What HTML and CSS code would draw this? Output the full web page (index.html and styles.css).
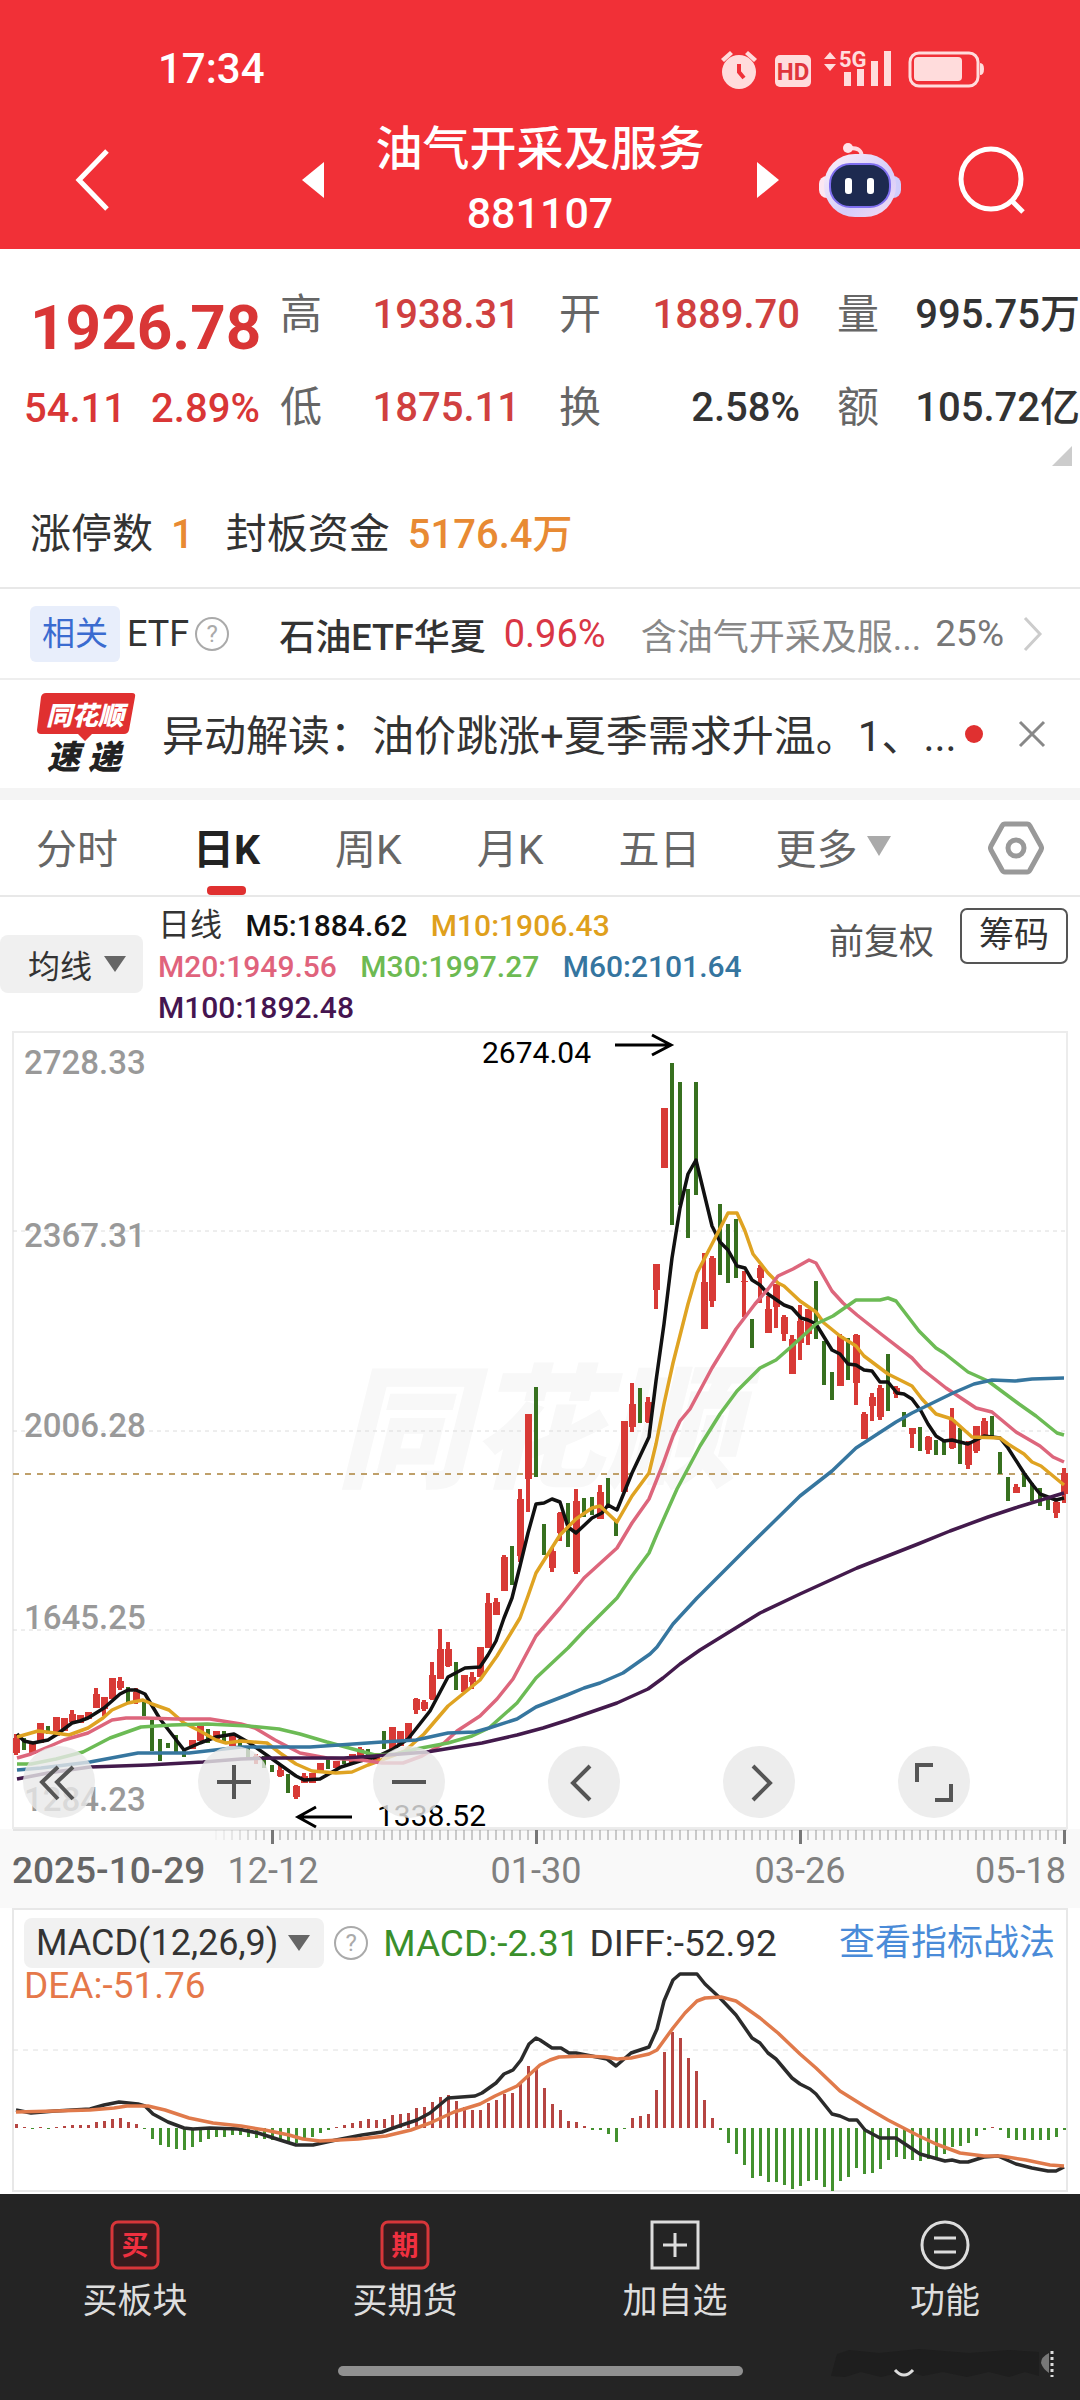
FILE: index.html
```html
<!DOCTYPE html>
<html lang="zh-CN">
<head>
    <meta charset="UTF-8">
    <meta name="viewport" content="width=device-width, initial-scale=1">
    <title>油气开采及服务 881107</title>
    <link rel="stylesheet" href="styles.css">
</head>
<body>
    <header class="header">
        <div class="status-bar">
            <span class="clock">17:34</span>
            <svg class="status-icons" viewBox="0 0 268 42" aria-hidden="true">
                <g fill="#ffdcdc">
                    <circle cx="21" cy="25" r="17"/>
                    <path d="M3 12l9-8 3 3-9 8zM39 12l-9-8-3 3 9 8z"/>
                    <rect x="57" y="8" width="36" height="32" rx="5"/>
                    <path d="M106 12l6-7 6 7zM106 17l6 7 6-7z"/>
                    <rect x="126" y="25" width="7" height="14"/>
                    <rect x="139" y="22" width="7" height="17"/>
                    <rect x="153" y="14" width="7" height="25"/>
                    <rect x="166" y="4" width="7" height="35"/>
                    <rect x="196" y="10" width="48" height="24" rx="4"/>
                    <path d="M262 16q4 0 4 6t-4 6z"/>
                </g>
                <rect x="192" y="6" width="68" height="33" rx="9" fill="none" stroke="#ffdcdc" stroke-width="3"/>
                <path d="M21 17v8l5 6" fill="none" stroke="#f03038" stroke-width="4"/>
                <text x="75" y="33" class="hd-text">HD</text>
                <text x="121" y="20" class="net-text">5G</text>
            </svg>
        </div>
        <div class="title-bar">
            <button class="icon-btn back" aria-label="返回">
                <svg width="36" height="64" viewBox="0 0 36 64"><path d="M32 3L4 32l28 29" fill="none" stroke="#fff" stroke-width="5"/></svg>
            </button>
            <div class="title-group">
                <button class="icon-btn" aria-label="上一个">
                    <svg width="24" height="38" viewBox="0 0 24 38"><path d="M23 1v36L1 19z" fill="#fff"/></svg>
                </button>
                <h1 class="title">油气开采及服务<span class="code">881107</span></h1>
                <button class="icon-btn" aria-label="下一个">
                    <svg width="24" height="38" viewBox="0 0 24 38"><path d="M1 1v36l22-18z" fill="#fff"/></svg>
                </button>
            </div>
            <div class="title-tools">
                <button class="icon-btn" aria-label="智能助手">
                    <svg width="82" height="76" viewBox="0 0 82 76">
                        <defs>
                            <linearGradient id="shell" x1="0" y1="0" x2="1" y2="1">
                                <stop offset="0" stop-color="#fdf0f8"/>
                                <stop offset="0.6" stop-color="#d5cdfa"/>
                                <stop offset="1" stop-color="#f6dcf2"/>
                            </linearGradient>
                        </defs>
                        <path d="M43 16c0-8-4-10-12-10" fill="none" stroke="#ffd9e2" stroke-width="4"/>
                        <circle cx="29" cy="6" r="5" fill="#ffe3ea"/>
                        <rect x="0" y="34" width="16" height="22" rx="8" fill="#fbe6f2"/>
                        <rect x="66" y="34" width="16" height="22" rx="8" fill="#cfcdfb"/>
                        <rect x="5" y="12" width="72" height="63" rx="31" fill="url(#shell)"/>
                        <rect x="11" y="22" width="60" height="43" rx="20" fill="#1d2a50" stroke="#7f6ff0" stroke-width="2"/>
                        <rect x="26" y="36" width="7" height="16" rx="3" fill="#fff"/>
                        <rect x="48" y="36" width="7" height="16" rx="3" fill="#fff"/>
                    </svg>
                </button>
                <button class="icon-btn" aria-label="搜索">
                    <svg width="68" height="68" viewBox="0 0 68 68" fill="none" stroke="#fff" stroke-width="5"><circle cx="33" cy="33" r="30"/><path d="M53 54l12 12"/></svg>
                </button>
            </div>
        </div>
    </header>

    <main>
        <section class="quote">
            <div class="price">
                <strong class="last">1926.78</strong>
                <div class="change"><span>54.11</span><span>2.89%</span></div>
            </div>
            <dl class="stats">
                <div class="stat"><dt>高</dt><dd class="up">1938.31</dd></div>
                <div class="stat"><dt>开</dt><dd class="up">1889.70</dd></div>
                <div class="stat"><dt>量</dt><dd>995.75万</dd></div>
                <div class="stat"><dt>低</dt><dd class="up">1875.11</dd></div>
                <div class="stat"><dt>换</dt><dd>2.58%</dd></div>
                <div class="stat"><dt>额</dt><dd>105.72亿</dd></div>
            </dl>
            <svg class="corner" width="20" height="20" viewBox="0 0 20 20" aria-hidden="true"><path d="M20 0v20H0z" fill="#ccc"/></svg>
        </section>

        <section class="limit">
            <span>涨停数</span><b>1</b><span class="limit-fund">封板资金</span><b>5176.4万</b>
        </section>

        <section class="etf">
            <span class="tag">相关</span>
            <span class="etf-label">ETF</span>
            <button class="help" aria-label="说明">?</button>
            <span class="etf-name">石油ETF华夏</span>
            <span class="etf-change">0.96%</span>
            <span class="etf-holding">含油气开采及服...</span>
            <span class="etf-pct">25%</span>
            <svg width="20" height="36" viewBox="0 0 20 36" aria-hidden="true"><path d="M2 2l15 16L2 34" fill="none" stroke="#ccc" stroke-width="3"/></svg>
        </section>

        <section class="news">
            <svg class="news-logo" width="100" height="88" viewBox="0 0 100 88" role="img" aria-label="同花顺速递">
                <path d="M10 3h86q4 0 3 4l-6 33q-1 4-5 4H56l-7 7-7-7H5q-4 0-4-4L5 7q1-4 5-4z" fill="#e03030"/>
                <text x="49" y="35" class="logo-top">同花顺</text>
                <text x="48" y="79" class="logo-bottom">速 递</text>
            </svg>
            <a class="news-text" href="#">异动解读：油价跳涨+夏季需求升温。1、...</a>
            <i class="dot"></i>
            <button class="icon-btn" aria-label="关闭">
                <svg width="28" height="28" viewBox="0 0 28 28"><path d="M2 2l24 24M26 2L2 26" stroke="#888" stroke-width="3"/></svg>
            </button>
        </section>

        <nav class="tabs">
            <button class="tab">分时</button>
            <button class="tab active">日K</button>
            <button class="tab">周K</button>
            <button class="tab">月K</button>
            <button class="tab">五日</button>
            <button class="tab more">更多<svg width="26" height="22" viewBox="0 0 26 22"><path d="M1 1h24L13 21z" fill="#aaa"/></svg></button>
            <button class="icon-btn settings" aria-label="设置">
                <svg width="56" height="54" viewBox="0 0 56 54" fill="none" stroke="#999" stroke-width="5"><path d="M17 3h22q2 0 3 2l11 20q1 2 0 4L42 49q-1 2-3 2H17q-2 0-3-2L3 29q-1-2 0-4L14 5q1-2 3-2z"/><circle cx="28" cy="27" r="8"/></svg>
            </button>
        </nav>

        <section class="ma-bar">
            <button class="ma-select">均线<svg width="22" height="16" viewBox="0 0 22 16"><path d="M0 0h22L11 16z" fill="#666"/></svg></button>
            <div class="ma-values">
                <span class="c-text daily">日线</span>
                <span class="c-m5">M5:1884.62</span>
                <span class="c-m10">M10:1906.43</span><br>
                <span class="c-m20">M20:1949.56</span>
                <span class="c-m30">M30:1997.27</span>
                <span class="c-m60">M60:2101.64</span><br>
                <span class="c-m100">M100:1892.48</span>
            </div>
            <div class="ma-tools">
                <button class="adjust">前复权</button>
                <button class="chips">筹码</button>
            </div>
        </section>

        <section class="kline">
            <svg id="kline-chart" class="chart" viewBox="0 0 1080 798" role="img" aria-label="日K线图"></svg>
            <div class="chart-buttons">
                <button aria-label="最早"><svg viewBox="0 0 72 72"><path d="M35 21L19 36l16 17M50 21L34 36l16 17"/></svg></button>
                <button aria-label="放大"><svg viewBox="0 0 72 72"><path d="M19 36h34M36 19v34"/></svg></button>
                <button aria-label="缩小"><svg viewBox="0 0 72 72"><path d="M19 36h34"/></svg></button>
                <button aria-label="左移"><svg viewBox="0 0 72 72"><path d="M42 20L25 37l17 17"/></svg></button>
                <button aria-label="右移"><svg viewBox="0 0 72 72"><path d="M30 20l17 17-17 17"/></svg></button>
                <button aria-label="全屏"><svg viewBox="0 0 72 72"><path d="M19 36V19h16M37 54h16V38"/></svg></button>
            </div>
        </section>
        <svg id="date-axis" class="chart date-axis" viewBox="0 0 1080 79" role="img" aria-label="日期"></svg>

        <section class="macd">
            <svg id="macd-chart" class="chart" viewBox="0 0 1080 286" role="img" aria-label="MACD"></svg>
            <div class="macd-head">
                <button class="macd-select">MACD(12,26,9)<svg width="22" height="16" viewBox="0 0 22 16"><path d="M0 0h22L11 16z" fill="#666"/></svg></button>
                <button class="help" aria-label="说明">?</button>
                <span class="c-macd">MACD:-2.31</span>
                <span class="c-text">DIFF:-52.92</span>
                <a class="macd-link" href="#">查看指标战法</a>
                <span class="c-dea">DEA:-51.76</span>
            </div>
        </section>
    </main>

    <footer class="footer">
        <nav class="actions">
            <button class="action">
                <svg width="50" height="50" viewBox="0 0 50 50"><rect x="2" y="2" width="46" height="46" rx="6" fill="#351c1e" stroke="#d8363a" stroke-width="3"/><text x="25" y="35" class="action-glyph">买</text></svg>
                买板块
            </button>
            <button class="action">
                <svg width="50" height="50" viewBox="0 0 50 50"><rect x="2" y="2" width="46" height="46" rx="6" fill="#351c1e" stroke="#d8363a" stroke-width="3"/><text x="25" y="35" class="action-glyph">期</text></svg>
                买期货
            </button>
            <button class="action">
                <svg width="50" height="50" viewBox="0 0 50 50" fill="none" stroke="#ddd" stroke-width="3"><path d="M2 2h46v46H2zM13 25h24M25 13v24"/></svg>
                加自选
            </button>
            <button class="action">
                <svg width="50" height="50" viewBox="0 0 50 50" fill="none" stroke="#ddd" stroke-width="3"><circle cx="25" cy="25" r="23"/><path d="M14 18h22M14 32h22"/></svg>
                功能
            </button>
        </nav>
        <div class="home-bar"></div>
        <svg class="mark" width="230" height="34" viewBox="0 0 230 34" aria-hidden="true">
            <path d="M4 30l6-22 12-4 30 3 40-4 50 4 40-3 30 2v24l-14-4-16 5-20-5-22 5-24-5-20 4-16-5-26 6-20-5-16 5z" fill="#1e1e1e"/>
            <path d="M68 24q9 10 18 0" fill="none" stroke="#ddd" stroke-width="3"/>
            <path d="M222 7q-8 4-8 10 2 6 8 10z" fill="#777"/>
            <path d="M225 5v26" stroke="#ddd" stroke-width="3" stroke-dasharray="3 3"/>
        </svg>
    </footer>

    <script src="chart.js"></script>
</body>
</html>
```
FILE: styles.css
```css
* { box-sizing: border-box; }
body { margin: 0; background: #fff; color: #333; font-family: Roboto, "Noto Sans CJK SC", sans-serif; font-size: 36px; }
button { padding: 0; border: none; background: none; color: inherit; font: inherit; cursor: pointer; }
a { color: inherit; text-decoration: none; }
svg { display: block; flex-shrink: 0; }
.icon-btn { display: flex; }

/* header */
.header { background: #f13037; color: #fff; padding-top: 45px; height: 249px; }
.status-bar { display: flex; justify-content: space-between; align-items: center; padding: 0 94px 0 158px; height: 46px; }
.clock { font-size: 42px; font-weight: 500; }
.status-icons { width: 268px; height: 42px; }
.hd-text { font-size: 24px; font-weight: 700; fill: #e0353c; text-anchor: middle; }
.net-text { font-size: 22px; font-weight: 700; fill: #ffdcdc; }
.title-bar { display: grid; grid-template-columns: 1fr auto 1fr; align-items: center; margin-top: 23px; }
.back { padding-left: 75px; }
.title-group { display: flex; align-items: center; gap: 51px; }
.title { margin: 0; padding-top: 4px; text-align: center; font-size: 47px; font-weight: 500; line-height: 62px; }
.code { display: block; font-size: 43px; line-height: 66px; }
.title-tools { display: flex; justify-content: flex-end; align-items: center; gap: 57px; padding-right: 54px; }

/* quote */
.quote { position: relative; display: grid; grid-template-columns: 280px 1fr; height: 221px; padding-top: 26px; font-weight: 500; }
.price { color: #d93636; padding-top: 10px; }
.last { display: block; padding-left: 30px; font-size: 62px; line-height: 86px; font-weight: 700; }
.change { display: flex; gap: 25px; padding-left: 24px; margin-top: 10px; font-size: 40px; line-height: 56px; }
.stats { display: grid; grid-template-columns: 240px 280px 1fr; grid-auto-rows: 93px; margin: 0; }
.stat { display: flex; justify-content: space-between; line-height: 80px; font-size: 40px; white-space: nowrap; }
.stat:nth-child(3n+2) { padding-left: 39px; }
.stat:nth-child(3n) { padding-left: 37px; }
.stat dt { font-size: 42px; font-weight: 400; color: #666; }
.stat dd { margin: 0; }
.up { color: #d04040; }
.corner { position: absolute; right: 8px; bottom: 4px; }

.limit { display: flex; align-items: baseline; height: 119px; padding: 34px 30px 0; border-bottom: 2px solid #e8e8e8; font-size: 41px; line-height: 60px; }
.limit b { margin-left: 18px; color: #e88a33; font-weight: 500; font-size: 40px; }
.limit-fund { margin-left: 32px; }

/* related etf */
.etf { display: flex; align-items: center; height: 91px; padding: 0 37px 0 30px; white-space: nowrap; border-bottom: 2px solid #eee; }
.tag { padding: 0 12px; border-radius: 6px; background: #e8eefb; color: #3a6bd0; font-size: 33px; line-height: 56px; }
.etf-label { margin-left: 7px; }
.help { width: 34px; height: 34px; border: 2px solid #aaa; border-radius: 50%; color: #aaa; font-size: 24px; line-height: 28px; }
.etf .help { margin: 0 50px 0 6px; }
.etf-name { font-weight: 500; }
.etf-change { margin-left: 18px; color: #d93645; font-size: 38px; }
.etf-holding { margin-left: auto; color: #888; }
.etf-pct { margin: 0 19px 0 14px; color: #777; font-size: 37px; }

.news { display: flex; align-items: center; height: 108px; padding: 0 34px 0 36px; }
.logo-top, .logo-bottom { font-weight: 900; font-style: italic; text-anchor: middle; }
.logo-top { font-size: 26px; fill: #fff; }
.logo-bottom { font-size: 33px; fill: #222; }
.news-text { flex: 1; margin-left: 26px; padding-bottom: 4px; font-size: 42px; white-space: nowrap; }
.dot { width: 18px; height: 18px; margin-right: 35px; border-radius: 50%; background: #e03030; }

/* period tabs */
.tabs { display: flex; align-items: center; height: 109px; padding: 0 36px; border-top: 12px solid #f4f4f4; border-bottom: 2px solid #e8e8e8; color: #666; font-size: 41px; }
.tab { position: relative; height: 100%; margin-right: 75px; padding-bottom: 4px; white-space: nowrap; }
.active { color: #222; font-weight: 700; }
.active::after { content: ""; position: absolute; left: 14px; right: 14px; bottom: 0; height: 9px; border-radius: 4px; background: #e03030; }
.more { display: flex; align-items: center; gap: 8px; margin-right: 0; }
.settings { margin-left: auto; }

/* moving averages */
.ma-bar { display: flex; align-items: flex-start; height: 134px; font-size: 30px; }
.ma-select { display: flex; align-items: center; gap: 12px; width: 143px; height: 58px; margin-top: 38px; padding-left: 28px; border-radius: 8px; background: #f0f0f0; font-size: 32px; }
.ma-values { margin: 8px 0 0 15px; line-height: 41px; font-weight: 500; white-space: nowrap; }
.ma-values span { margin-right: 16px; }
.daily { font-size: 32px; font-weight: 400; }
.ma-tools { display: flex; align-items: center; gap: 26px; margin: 11px 12px 0 auto; }
.adjust { padding-top: 4px; color: #555; font-size: 35px; }
.chips { height: 56px; padding: 0 17px; border: 2px solid #555; border-radius: 7px; font-size: 35px; line-height: 50px; }
.c-text { color: #333; }
.c-m5 { color: #111; }
.c-m10 { color: #dfa01c; }
.c-m20 { color: #e0637c; }
.c-m30 { color: #6dba52; }
.c-m60 { color: #35759f; }
.c-m100 { color: #451550; }
.c-macd { color: #3a8f2b; }
.c-dea { color: #e5784a; }

/* charts */
.chart { width: 100%; height: auto; overflow: visible; }
.kline { position: relative; }
.chart-buttons { position: absolute; left: 0; right: 0; bottom: 11px; display: flex; gap: 103px; padding-left: 23px; }
.chart-buttons button { width: 72px; height: 72px; border-radius: 50%; background: rgba(232, 232, 232, 0.8); }
.chart-buttons path { fill: none; stroke: #555; stroke-width: 4; }
.date-axis { background: #f9f9f9; }
.axis-label { font-size: 33px; font-weight: 500; fill: #999; }
.peak-label { font-size: 30px; fill: #000; }
.date-label { font-size: 36px; fill: #808080; }
.date-label.first { font-size: 37px; font-weight: 500; fill: #666; }
.watermark { font-size: 134px; font-weight: 900; font-style: italic; fill: #f8f8f8; }

.macd { position: relative; }
.macd-head { position: absolute; top: 10px; left: 24px; right: 25px; display: grid; grid-template-columns: auto auto auto auto 1fr; align-items: center; column-gap: 10px; font-size: 37px; white-space: nowrap; }
.macd-select { display: flex; align-items: center; gap: 10px; height: 50px; padding: 0 14px 0 12px; border-radius: 8px; background: #f1f1f1; font-size: 36px; }
.macd-head .help { margin-right: 5px; }
.macd-link { justify-self: end; color: #4a8bd8; font-size: 36px; line-height: 50px; }
.c-dea { grid-column: 1 / -1; line-height: 36px; }

/* bottom actions */
.footer { position: relative; height: 207px; padding-top: 26px; background: #242424; color: #ddd; }
.actions { display: grid; grid-template-columns: repeat(4, 1fr); }
.action { display: flex; flex-direction: column; align-items: center; gap: 6px; font-size: 35px; line-height: 52px; }
.action-glyph { font-size: 27px; font-weight: 700; fill: #f03040; text-anchor: middle; }
.home-bar { width: 405px; max-width: 60%; height: 10px; margin: 38px auto 0; border-radius: 5px; background: #909090; }
.mark { position: absolute; right: 23px; bottom: 21px; }
```
FILE: chart.js
```js
const RED = '#d83a36';
const GREEN = '#37701f';
const STEP = 8;
const LEFT = 16;

// [high, low, up, body top, body bottom]
const candles = [
    [703,724,1,707,722],[707,719,0],[713,723,1],[692,712,1],[695,703,0],[686,705,1],[687,700,1],[679,693,1,683,691],
    [684,692,1],[681,688,1],[657,677,1,663,677],[666,685,1,666,678],[647,668,1],[646,659,1,650,657],[656,672,0],[657,673,1,661,671],
    [670,685,0],[689,720,0],[708,730,0],[712,717,0],[704,721,0],[717,726,0],[709,718,1],[695,710,1],
    [698,712,0],[700,708,1],[700,712,0],[703,715,1],[708,717,0],[715,728,0],[723,733,1,725,729],[725,737,0],
    [734,741,0],[734,746,1,739,745],[743,762,0],[754,768,1,755,766],[742,752,1,745,752],[742,752,1],[732,742,1],[728,738,0],
    [730,737,1],[727,733,0],[723,732,1],[716,726,1,718,726],[718,727,0],[722,733,1],[700,718,0],[696,718,1],
    [700,715,1],[692,710,1],[667,683,1,668,679],[669,680,1,671,678],[631,669,1,644,668],[598,648,1,618,648],[611,636,1,618,635],[631,659,0],
    [644,661,1],[641,658,1,646,651],[616,646,1],[562,617,1,572,617],[567,584,1,571,584],[524,560,1,526,560],[515,554,0],[458,531,1,468,525],
    [383,481,1,383,448],[356,446,0],[493,524,0],[517,541,1,520,537],[481,510,1,482,502],[472,516,0],[458,543,1,470,541],[467,486,0],
    [466,484,0],[454,488,1,461,488],[447,475,0],[488,505,0],[390,461,1],[352,401,1,373,396],[357,392,0],[366,392,1,371,391],
    [233,278,1,233,259],[77,137,1],[32,194,0,41,69],[51,174,0],[158,207,0],[51,164,0,51,164],[222,298,1,251,298],[225,276,1,227,270],
    [173,244,0],[193,252,0],[188,247,0],[240,286,1,250,251],[288,317,0],[234,272,1,237,247],[265,302,1,278,302],[253,297,1,253,276],
    [284,310,1,286,303],[304,343,1,308,343],[274,329,1,290,312],[278,314,1,278,303],[250,308,0],[310,354,0],[341,369,0],[303,355,1,305,355],
    [307,349,0],[303,374,1,304,352],[381,408,1,383,408],[362,390,1,366,375],[354,389,1,357,386],[323,380,0],[355,367,1,357,363],[381,396,0],
    [397,417,1,397,403],[396,420,0],[405,423,1,406,419],[409,424,0],[409,424,0],[377,418,1,389,417],[397,433,0],[410,438,1,412,434],
    [395,422,1,395,420],[387,405,1,390,405],[385,407,0],[421,443,0],[446,470,0],[453,462,1,456,462],[443,456,0],[452,470,0],
    [457,475,0],[468,479,0],[470,487,1,471,482],[437,472,1,442,463]
];

const averages = [
    ['#111', '17,703 24,710 33,712 48,709 56,704 72,692 80,690 88,687 104,677 120,663 128,659 136,659 145,663 160,688 184,719 200,712 216,706 234,703 248,711 275,730 296,745 304,749 320,748 341,736 360,730 376,726 393,718 408,708 430,680 448,646 465,637 480,636 488,624 496,610 504,587 512,567 520,535 528,502 536,473 544,472 552,468 560,471 568,496 576,502 592,487 602,482 608,474 617,479 632,442 641,423 649,406 656,350 664,293 672,227 680,177 688,143 696,129 704,162 712,195 720,211 728,219 737,235 745,237 752,249 760,254 768,263 784,274 792,277 801,287 808,289 816,293 832,319 840,323 848,333 856,334 864,339 872,340 880,351 888,351 897,362 904,363 912,368 921,380 928,393 936,405 944,410 952,409 968,413 984,405 1000,407 1008,417 1024,442 1032,453 1040,463 1056,469 1064,467'],
    ['#dfa322', '17,706 38,700 55,702 69,704 88,697 103,687 112,679 128,672 143,669 152,673 169,679 184,692 200,700 216,709 226,712 241,710 267,712 280,722 296,733 312,740 336,742 352,741 368,734 384,728 405,720 416,710 424,703 448,675 480,649 497,625 520,587 528,565 536,542 560,504 576,488 592,477 600,475 617,491 632,465 649,442 656,413 664,373 673,332 688,273 697,242 712,213 728,182 737,182 745,200 753,223 768,242 778,252 784,255 800,270 816,281 824,292 840,305 856,315 864,325 888,343 912,355 922,368 936,383 952,388 972,406 1000,407 1008,413 1024,423 1032,431 1041,435 1064,454'],
    ['#dd667c', '17,727 31,723 48,716 64,709 88,702 112,689 126,687 145,687 176,688 210,688 241,693 255,697 275,709 300,722 327,727 362,729 382,732 403,732 422,725 444,712 457,700 480,685 497,668 513,648 536,605 560,577 584,547 617,517 632,492 649,468 663,433 673,405 680,390 690,378 712,337 736,298 755,273 768,258 778,245 793,238 809,229 816,232 832,260 843,272 857,284 881,303 912,327 922,338 946,357 976,377 992,381 1016,401 1040,415 1053,426 1064,431'],
    ['#6cbb55', '17,733 31,733 56,728 83,721 110,707 141,696 172,694 207,693 248,695 279,698 300,703 327,711 375,724 396,723 416,718 448,712 472,705 489,697 517,672 536,647 568,617 584,600 617,567 632,545 649,522 657,503 677,458 700,415 720,383 737,360 760,337 776,329 792,315 816,293 833,285 856,269 880,269 888,267 896,270 919,300 936,317 944,322 968,341 988,350 1019,373 1036,385 1057,402 1064,404'],
    ['#36769f', '17,739 41,737 90,731 138,722 189,722 241,716 310,716 382,711 416,709 448,702 475,701 489,697 517,688 536,676 567,664 584,657 600,652 623,642 640,630 650,623 657,616 673,593 697,567 747,517 800,465 832,440 856,417 896,391 912,382 953,362 974,353 992,349 1015,350 1032,348 1064,347'],
    ['#431a4c', '17,748 48,742 90,736 148,734 203,731 241,728 275,727 344,727 375,725 427,721 482,712 517,704 543,697 568,689 617,672 648,658 663,647 680,633 700,619 760,582 800,563 857,537 918,513 950,500 988,486 1015,477 1064,462']
];

const macdBars = [
    4,1,-1,1,-1,1,2,3,3,3,6,7,9,10,6,4,-1,-11,-17,-19,-21,-22,-19,-14,-11,-9,-9,-7,-7,-9,-10,-11,-12,-12,-14,-15,-11,-9,-5,-2,
    1,3,5,7,9,8,9,13,14,15,20,21,26,31,33,27,21,18,18,25,28,34,35,44,62,59,40,24,18,7,6,2,-2,-2,-6,-14,-1,10,12,14,
    38,76,96,90,70,57,28,10,-2,-15,-26,-37,-50,-48,-54,-54,-57,-61,-58,-53,-52,-59,-63,-53,-49,-40,-46,-45,-41,-32,
    -29,-31,-32,-33,-31,-29,-26,-19,-18,-15,-8,-2,1,-2,-10,-12,-12,-12,-12,-12,-9,-2
];
const diffLine = '16,202 31,205 55,203 90,201 104,197 119,194 138,196 145,198 153,206 168,214 184,220 193,221 210,220 238,221 258,225 280,232 296,237 313,237 336,232 362,227 382,224 399,218 417,212 430,205 448,190 475,188 482,185 496,175 504,166 513,162 521,152 529,136 536,130 540,132 552,140 561,140 569,145 576,145 607,151 616,158 631,145 649,139 657,121 664,93 673,72 680,66 697,66 705,76 720,90 736,107 752,130 760,135 768,145 776,151 792,170 800,176 810,181 816,186 832,206 840,208 849,212 857,212 865,222 880,230 896,230 905,236 920,246 945,253 952,252 960,254 968,254 984,249 998,248 1016,256 1032,260 1048,263 1056,263 1064,259';
const deaLine = '16,204 55,203 90,202 114,200 127,198 148,198 165,202 189,210 213,215 241,218 265,222 289,227 303,231 320,233 358,231 386,228 411,222 430,215 454,204 480,196 495,188 517,178 540,157 550,152 559,149 585,148 605,149 617,151 631,150 649,146 657,142 673,120 685,105 697,93 705,90 721,89 736,93 760,110 778,125 800,146 816,160 840,183 864,198 888,212 919,228 936,236 960,245 984,248 1001,248 1026,252 1050,257 1064,258';

const rect = (x, y, w, h, fill) => `<rect x="${x}" y="${y}" width="${w}" height="${h}" fill="${fill}"/>`;
const line = (x1, y1, x2, y2, stroke, extra = '') => `<path d="M${x1} ${y1}L${x2} ${y2}" stroke="${stroke}" ${extra}/>`;
const poly = (points, stroke) => `<polyline points="${points}" fill="none" stroke="${stroke}" stroke-width="3.5" stroke-linejoin="round"/>`;
const label = (x, y, text, cls, anchor = 'start') => `<text x="${x}" y="${y}" class="${cls}" text-anchor="${anchor}">${text}</text>`;

function drawKline() {
    let out = label(336, 446, '同花顺', 'watermark');
    out += '<path d="M13 797V1h1054v796z" fill="none" stroke="#ececec" stroke-width="2"/>';
    [200, 400, 599].forEach(y => out += line(13, y, 1066, y, '#dcdcdc', 'stroke-dasharray="4 4"'));
    out += line(13, 443, 1066, 443, '#bfa06a', 'stroke-width="2" stroke-dasharray="6 6"');
    [['2728.33', 43], ['2367.31', 216], ['2006.28', 406], ['1645.25', 598], ['1284.23', 780]]
        .forEach(([text, y]) => out += label(24, y, text, 'axis-label'));
    candles.forEach(([high, low, up, top = high, bottom = low], i) => {
        const x = LEFT + i * STEP;
        const color = up ? RED : GREEN;
        out += rect(x - 2, high, 4, low - high, color);
        if (up) out += rect(x - 3, top, 7, bottom - top, color);
    });
    averages.forEach(([color, points]) => out += poly(points, color));
    out += '<path d="M615 14h55M652 4l19 10-19 10M352 786h-54M316 776l-18 10 18 10" fill="none" stroke="#000" stroke-width="3"/>';
    out += label(482, 32, '2674.04', 'peak-label') + label(377, 795, '1338.52', 'peak-label');
    document.getElementById('kline-chart').innerHTML = out;
}

function drawDates() {
    let out = line(13, 1, 1067, 1, '#e4e4e4', 'stroke-width="2"');
    for (let i = 25; i < 132; i++) {
        out += line(LEFT + i * STEP, 1, LEFT + i * STEP, 11, '#999', i < 32 ? `opacity="${(i - 24) / 8}"` : '');
    }
    [32, 65, 98, 131].forEach(i => out += rect(LEFT + i * STEP - 1, 1, 3, 14, '#777'));
    out += label(12, 54, '2025-10-29', 'date-label first');
    out += label(273, 54, '12-12', 'date-label', 'middle') + label(536, 54, '01-30', 'date-label', 'middle');
    out += label(800, 54, '03-26', 'date-label', 'middle') + label(1066, 54, '05-18', 'date-label', 'end');
    document.getElementById('date-axis').innerHTML = out;
}

function drawMacd() {
    let out = '<path d="M13 1h1054v282H13z" fill="#fff" stroke="#e8e8e8" stroke-width="2"/>';
    out += line(13, 142, 1066, 142, '#e0e0e0', 'stroke-dasharray="5 5"');
    macdBars.forEach((v, i) => {
        out += rect(LEFT + i * STEP - 1, v > 0 ? 220 - v : 220, 3, Math.abs(v), v > 0 ? '#b64542' : '#43912f');
    });
    out += poly(diffLine, '#2b2b2b') + poly(deaLine, '#e07a4b');
    document.getElementById('macd-chart').innerHTML = out;
}

drawKline();
drawDates();
drawMacd();
```
